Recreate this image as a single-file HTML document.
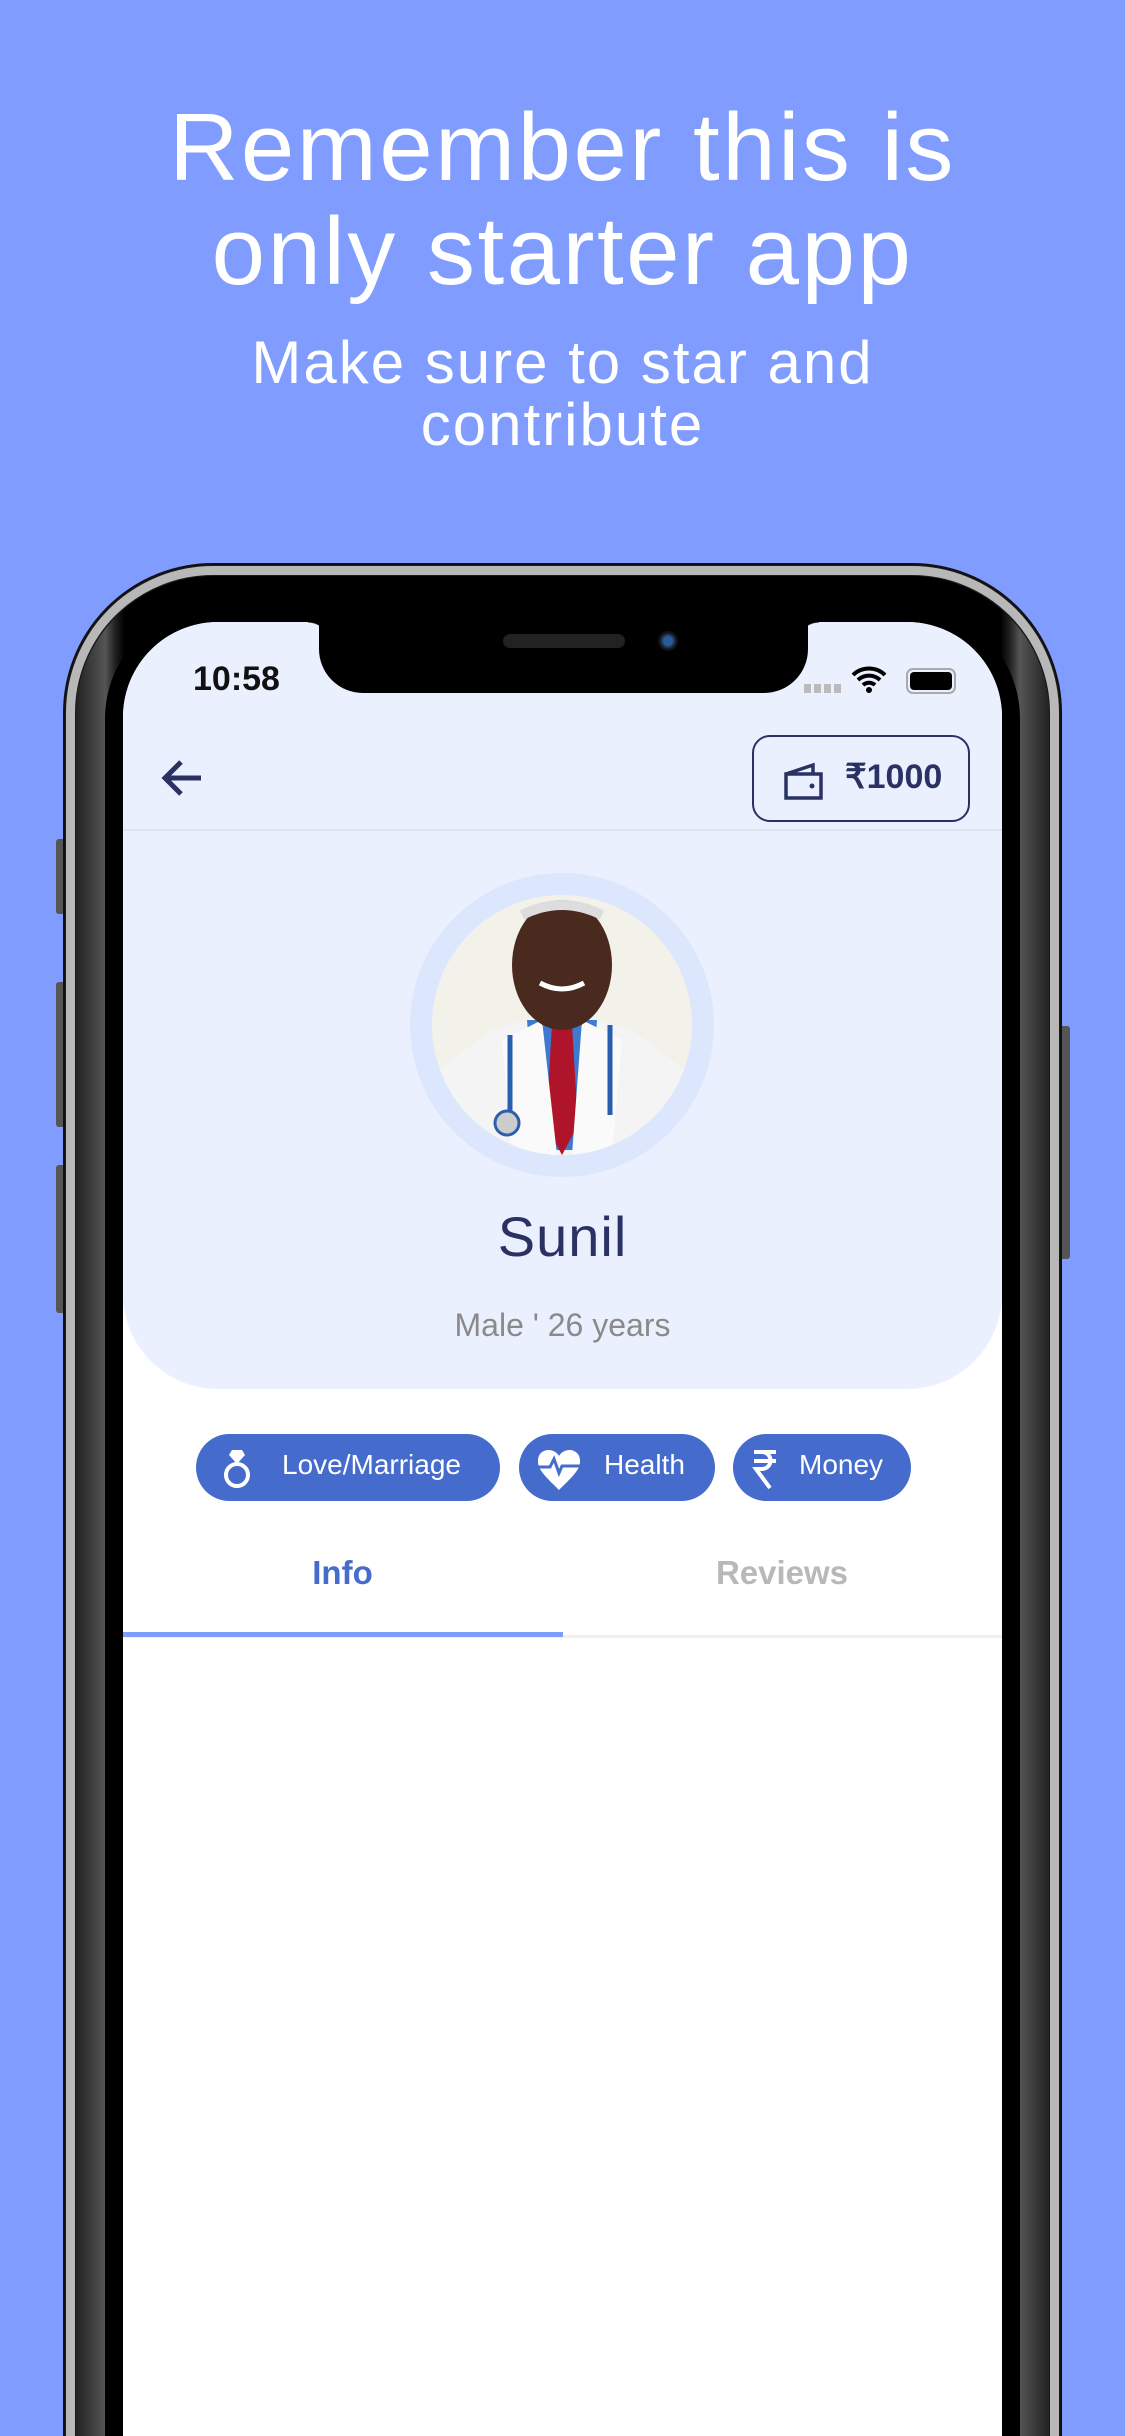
<!DOCTYPE html>
<html><head><meta charset="utf-8"><style>
*{margin:0;padding:0;box-sizing:border-box}
html,body{width:1125px;height:2436px;overflow:hidden}
body{background:#7F9CFE;font-family:"Liberation Sans",sans-serif}
#w{position:relative;width:1125px;height:2436px;overflow:hidden}
.h{position:absolute;left:0;width:1125px;text-align:center;color:#fff}
.abs{position:absolute}
</style></head><body><div id="w">
<div class="h" style="top:96px;font-size:96px;line-height:104px;letter-spacing:2.5px">Remember this is<br>only starter app</div>
<div class="h" style="top:332px;font-size:60px;line-height:62px;letter-spacing:2px">Make sure to star and<br>contribute</div>

<!-- side buttons -->
<div class="abs" style="left:56px;top:839px;width:10px;height:75px;background:#555;border-radius:3px"></div>
<div class="abs" style="left:56px;top:982px;width:10px;height:145px;background:#555;border-radius:3px"></div>
<div class="abs" style="left:56px;top:1165px;width:10px;height:148px;background:#555;border-radius:3px"></div>
<div class="abs" style="left:1060px;top:1026px;width:10px;height:233px;background:#555;border-radius:3px"></div>

<!-- frame -->
<div class="abs" style="left:63px;top:563px;width:999px;height:2200px;border-radius:150px;background:#1a1a1a;border:2px solid #111"></div>
<div class="abs" style="left:66px;top:566px;width:993px;height:2200px;border-radius:147px;border:9px solid #b8b8b8"></div>
<div class="abs" style="left:76px;top:576px;width:973px;height:2200px;border-radius:138px;background:linear-gradient(90deg,#222,#555 3%,#222 4%,#000 5%,#000 95%,#222 96%,#555 97%,#222)"></div>
<div class="abs" style="left:105px;top:604px;width:915px;height:2200px;border-radius:115px;background:#000"></div>

<!-- screen -->
<div class="abs" style="left:123px;top:622px;width:879px;height:2100px;border-radius:95px;background:#fff;overflow:hidden">
  <div class="abs" style="left:0;top:0;width:879px;height:767px;background:#EAF0FE;border-radius:0 0 95px 95px"></div>
  <div class="abs" style="left:0;top:207px;width:879px;height:2px;background:#dde3ef"></div>
  <!-- notch -->
  <div class="abs" style="left:196px;top:-10px;width:489px;height:81px;background:#000;border-radius:0 0 44px 44px"></div>
  <div class="abs" style="left:185px;top:0;width:22px;height:22px;background:radial-gradient(circle at 0 100%,transparent 21px,#000 22px)"></div>
  <div class="abs" style="left:674px;top:0;width:22px;height:22px;background:radial-gradient(circle at 100% 100%,transparent 21px,#000 22px)"></div>
  <div class="abs" style="left:380px;top:12px;width:122px;height:14px;background:#222;border-radius:7px"></div>
  <div class="abs" style="left:535px;top:9px;width:20px;height:20px;background:radial-gradient(circle,#2a5a9a 30%,#111 60%);border-radius:50%"></div>
  <!-- status -->
  <div class="abs" style="left:70px;top:38px;font-size:34px;font-weight:bold;color:#111">10:58</div>
  <div class="abs" style="left:681px;top:62px;width:38px;height:9px;background:repeating-linear-gradient(90deg,#bbb 0 7px,transparent 7px 10px)"></div>
  <svg class="abs" style="left:728px;top:42px" width="36" height="30" viewBox="0 0 36 30"><path d="M2 11a23 23 0 0 1 32 0M7 16a16 16 0 0 1 22 0M12 21a9 9 0 0 1 12 0" stroke="#000" stroke-width="4" fill="none"/><circle cx="18" cy="26" r="3" fill="#000"/></svg>
  <div class="abs" style="left:783px;top:46px;width:50px;height:26px;border:2px solid #aaa;border-radius:7px;padding:2px"><div style="width:100%;height:100%;background:#000;border-radius:4px"></div></div>
  <!-- header -->
  <svg class="abs" style="left:38px;top:136px" width="44" height="40" viewBox="0 0 44 40"><path d="M40 20H5M20 4 4 20l16 16" stroke="#2a3264" stroke-width="5" fill="none"/></svg>
  <div class="abs" style="left:629px;top:113px;width:218px;height:87px;border:2px solid #2a3264;border-radius:18px"></div>
  <svg class="abs" style="left:660px;top:140px" width="42" height="38" viewBox="0 0 42 38"><path d="M3 12h35v24H3zM3 12 30 3v9" stroke="#2a3264" stroke-width="3.5" fill="none"/><circle cx="29" cy="24" r="2.5" fill="#2a3264"/></svg>
  <div class="abs" style="left:722px;top:135px;font-size:34px;font-weight:bold;color:#2a3264">₹1000</div>
  <!-- avatar -->
  <div class="abs" style="left:287px;top:251px;width:304px;height:304px;border-radius:50%;background:#DCE6FD"></div>
  <svg class="abs" style="left:309px;top:273px" width="260" height="260" viewBox="0 0 260 260"><defs><clipPath id="c"><circle cx="130" cy="130" r="130"/></clipPath></defs><g clip-path="url(#c)">
    <rect width="260" height="260" fill="#f2f2ea"/>
    <path d="M0 180 60 135 110 120h40l50 15 60 45v80H0z" fill="#f4f4f4"/>
    <path d="M95 125h70l-10 130h-50z" fill="#3d7ad0"/>
    <path d="M120 130h20l6 100-16 30-16-30z" fill="#b0142a"/>
    <path d="M70 145 110 125 125 260H80zM190 145 150 125 140 260h40z" fill="#fafafa"/>
    <path d="M78 140v80M178 130v90" stroke="#2a5fb0" stroke-width="5" fill="none"/>
    <circle cx="75" cy="228" r="12" fill="#ccc" stroke="#2a5fb0" stroke-width="3"/>
    <ellipse cx="130" cy="70" rx="50" ry="65" fill="#4a2a1e"/>
    <rect x="110" y="100" width="40" height="30" fill="#4a2a1e"/>
    <path d="M90 20q40-20 80 0" stroke="#ddd" stroke-width="10" fill="none"/>
    <path d="M108 88q22 12 44 0" stroke="#fff" stroke-width="5" fill="none"/>
  </g></svg>
  <div class="abs" style="left:0;width:879px;top:582px;text-align:center;font-size:56px;color:#2a3264;letter-spacing:1px">Sunil</div>
  <div class="abs" style="left:0;width:879px;top:685px;text-align:center;font-size:32px;color:#8a8a8a">Male ' 26 years</div>
  <!-- chips -->
  <div class="abs" style="left:73px;top:812px;width:304px;height:67px;border-radius:34px;background:#456BCD"></div>
  <div class="abs" style="left:396px;top:812px;width:196px;height:67px;border-radius:34px;background:#456BCD"></div>
  <div class="abs" style="left:610px;top:812px;width:178px;height:67px;border-radius:34px;background:#456BCD"></div>
  <svg class="abs" style="left:100px;top:826px" width="28" height="42" viewBox="0 0 28 42"><circle cx="14" cy="27" r="11" stroke="#fff" stroke-width="4" fill="none"/><path d="M9 2h10l3 5-8 9-8-9z" fill="#fff"/></svg>
  <div class="abs" style="left:159px;top:827px;font-size:28px;color:#fff">Love/Marriage</div>
  <svg class="abs" style="left:413px;top:826px" width="46" height="42" viewBox="0 0 46 42"><path d="M23 8C17-2 1 1 2 14c0 8 9 16 21 28C35 30 44 22 44 14 45 1 29-2 23 8z" fill="#fff"/><path d="M2 19h12l4-8 5 14 3-7h18" stroke="#456BCD" stroke-width="3" fill="none"/></svg>
  <div class="abs" style="left:481px;top:827px;font-size:28px;color:#fff">Health</div>
  <svg class="abs" style="left:628px;top:826px" width="28" height="42" viewBox="0 0 28 42"><path d="M3 4h22M3 13h22M5 4h6a8 8 0 0 1 0 17H5l14 19" stroke="#fff" stroke-width="4" fill="none"/></svg>
  <div class="abs" style="left:676px;top:827px;font-size:28px;color:#fff">Money</div>
  <!-- tabs -->
  <div class="abs" style="left:0;width:439px;top:932px;text-align:center;font-size:33px;font-weight:bold;color:#456BCD">Info</div>
  <div class="abs" style="left:439px;width:440px;top:932px;text-align:center;font-size:33px;font-weight:bold;color:#b8b8b8">Reviews</div>
  <div class="abs" style="left:0;top:1013px;width:879px;height:3px;background:#f0f0f0"></div>
  <div class="abs" style="left:0;top:1010px;width:440px;height:5px;background:#7F9DFE"></div>
</div>
</div></body></html>
